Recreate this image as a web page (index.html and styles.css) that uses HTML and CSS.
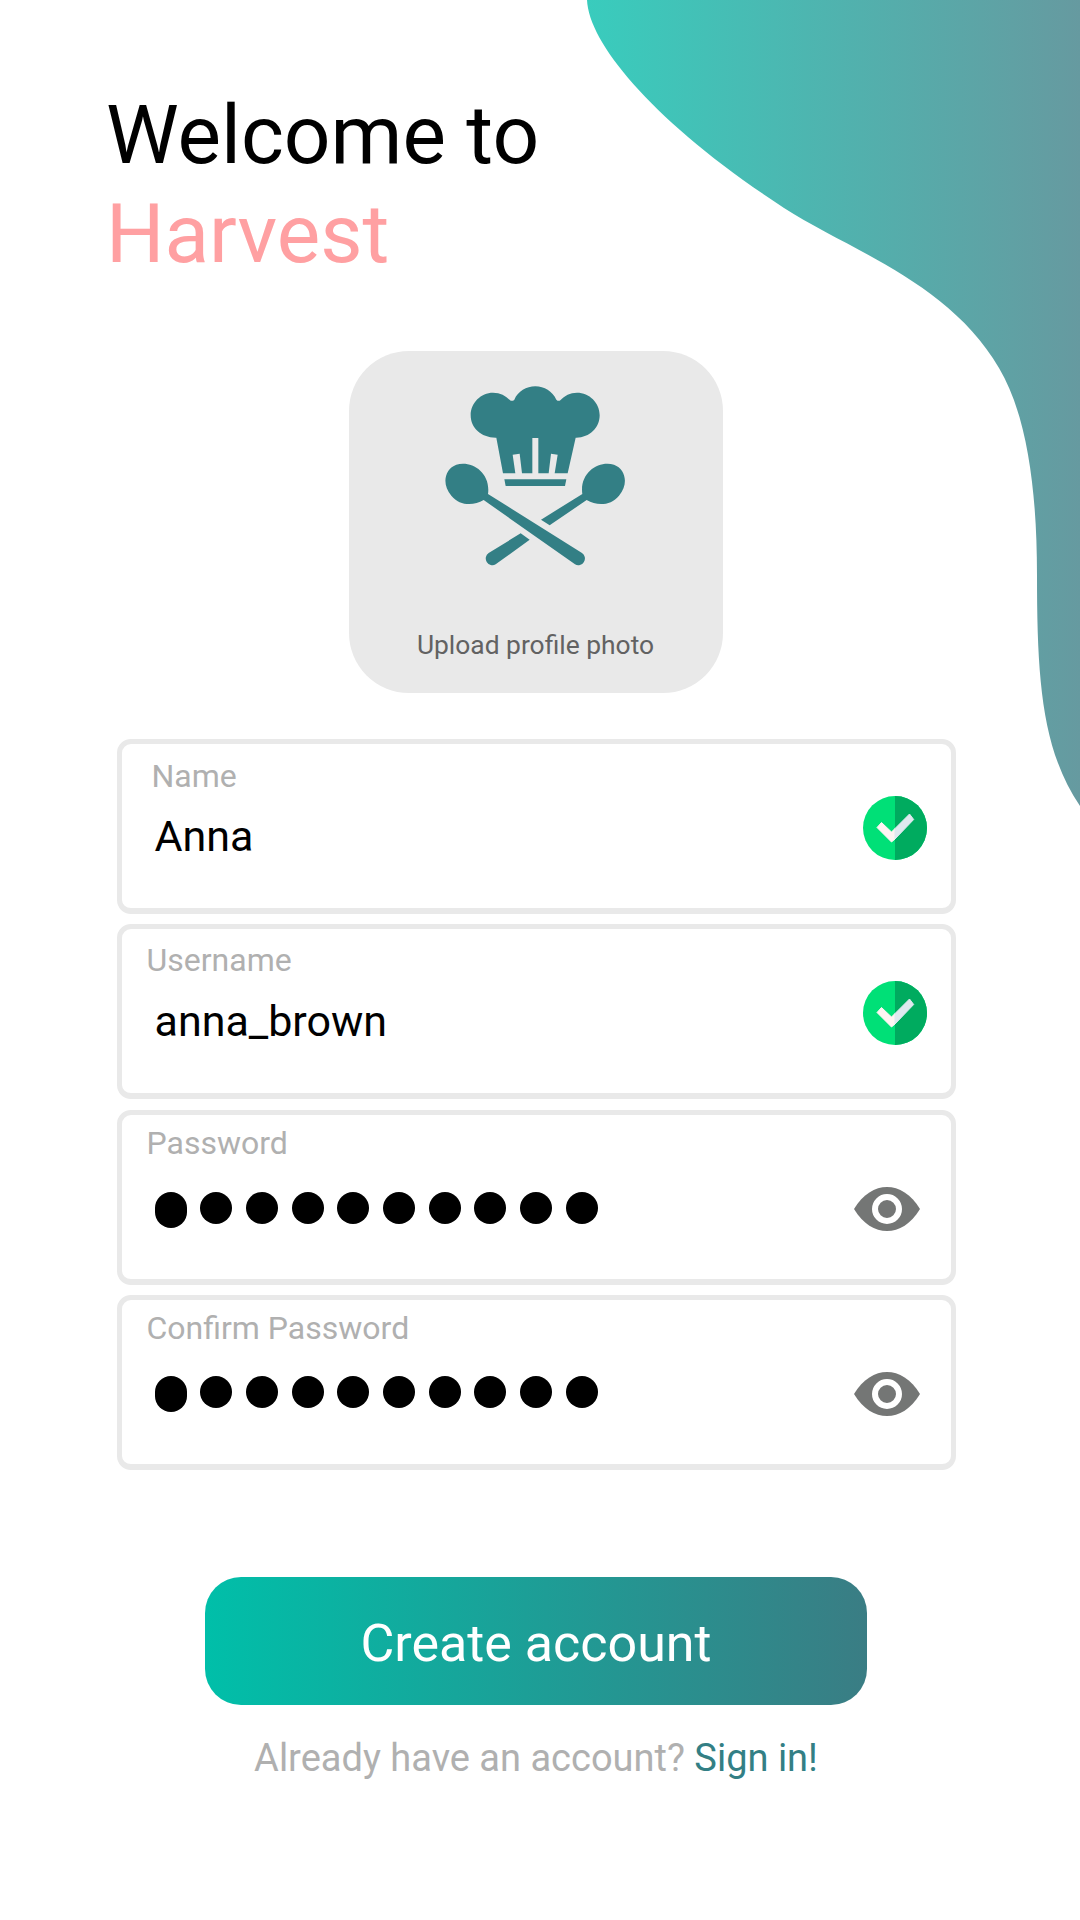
FILE: index.html
```html
<!DOCTYPE html>
<html lang="en">
<head>
<meta charset="utf-8">
<title>Harvest</title>
<link rel="stylesheet" href="styles.css">
</head>
<body>
<main class="page">
  <svg class="blob" viewBox="0 0 493 806" width="493" height="806" aria-hidden="true">
    <defs><linearGradient id="blobFill" x1="0" x2="1" y1="0" y2="0"><stop offset="0" stop-color="#39ccbd"/><stop offset="1" stop-color="#669aa0"/></linearGradient></defs>
    <path fill="url(#blobFill)" d="M0 0 C2 45 70 125 197 208 C262 250 362 282 412 368 C440 415 450 490 450 575 C450 680 455 750 493 806 V0 Z"/>
  </svg>
  <header class="title">
    <div class="title-line">Welcome to</div>
    <div class="title-line title-accent">Harvest</div>
  </header>
  <section class="upload">
    <svg class="chef" viewBox="310 130 555 555" aria-hidden="true">
      <g fill="#337f85">
        <path d="M470 291 C425 292 393 262 393 224 C393 186 424 156 460 156 C482 156 498 165 511 179 Q518 183 524 177 C535 152 560 137 587 137 C614 137 638 152 650 177 Q656 183 662 179 C675 165 691 156 712 156 C749 156 780 186 780 224 C780 262 749 292 708 291 L684 398 H645 L654 342 L634 339 L627 398 H596 V292 H578 V398 H547 L540 339 L519 342 L527 398 H490 Z"/>
        <path d="M494 416 H680 L676 436 H498 Z"/>
        <path d="M445 460 L727 637 A20 20 0 0 1 706 671 L432 478 C400 497 360 495 335 465 C305 430 315 385 350 372 C395 358 454 395 445 460 Z"/>
        <path d="M728 460 L604 537 L630 554 L741 478 C773 497 813 495 838 465 C868 430 858 385 823 372 C778 358 719 395 728 460 Z"/>
        <path d="M543 578 L447 637 A20 20 0 0 0 468 671 L570 597 Z"/>
      </g>
    </svg>
    <span class="upload-text">Upload profile photo</span>
  </section>
  <form class="form">
    <div class="field field-name">
      <div class="field-main">
        <span class="label label-name">Name</span>
        <span class="value">Anna</span>
      </div>
      <svg class="check" viewBox="0 0 64 64" aria-hidden="true">
        <circle cx="32" cy="32" r="32" fill="#00e077"/>
        <path d="M32 0 A32 32 0 0 1 32 64 Z" fill="#00ab5f"/>
        <path d="M18.5 26.5 L14 31.5 L28.5 46 L32 43 V32.5 L28.5 36 Z" fill="#fff5f3" stroke="#fff5f3" stroke-linejoin="round"/>
        <path d="M32 32.5 L46.5 18 L50.7 23.5 L32 43 Z" fill="#dfe9ef" stroke="#dfe9ef" stroke-linejoin="round"/>
      </svg>
    </div>
    <div class="field field-user">
      <div class="field-main">
        <span class="label">Username</span>
        <span class="value">anna_brown</span>
      </div>
      <svg class="check" viewBox="0 0 64 64" aria-hidden="true">
        <circle cx="32" cy="32" r="32" fill="#00e077"/>
        <path d="M32 0 A32 32 0 0 1 32 64 Z" fill="#00ab5f"/>
        <path d="M18.5 26.5 L14 31.5 L28.5 46 L32 43 V32.5 L28.5 36 Z" fill="#fff5f3" stroke="#fff5f3" stroke-linejoin="round"/>
        <path d="M32 32.5 L46.5 18 L50.7 23.5 L32 43 Z" fill="#dfe9ef" stroke="#dfe9ef" stroke-linejoin="round"/>
      </svg>
    </div>
    <div class="field field-pass">
      <div class="field-main">
        <span class="label">Password</span>
        <span class="dots" aria-label="Password hidden"><i class="dot dot-first"></i><i class="dot"></i><i class="dot"></i><i class="dot"></i><i class="dot"></i><i class="dot"></i><i class="dot"></i><i class="dot"></i><i class="dot"></i><i class="dot"></i></span>
      </div>
      <svg class="eye" viewBox="0 0 66 44" aria-hidden="true">
        <path fill="#747675" d="M0 22 C9 7 21 0 33 0 C45 0 57 7 66 22 C57 37 45 44 33 44 C21 44 9 37 0 22 Z"/>
        <circle cx="33" cy="22" r="12" fill="none" stroke="#fff" stroke-width="6"/>
      </svg>
    </div>
    <div class="field field-confirm">
      <div class="field-main">
        <span class="label">Confirm Password</span>
        <span class="dots" aria-label="Password hidden"><i class="dot dot-first"></i><i class="dot"></i><i class="dot"></i><i class="dot"></i><i class="dot"></i><i class="dot"></i><i class="dot"></i><i class="dot"></i><i class="dot"></i><i class="dot"></i></span>
      </div>
      <svg class="eye" viewBox="0 0 66 44" aria-hidden="true">
        <path fill="#747675" d="M0 22 C9 7 21 0 33 0 C45 0 57 7 66 22 C57 37 45 44 33 44 C21 44 9 37 0 22 Z"/>
        <circle cx="33" cy="22" r="12" fill="none" stroke="#fff" stroke-width="6"/>
      </svg>
    </div>
  </form>
  <button class="cta" type="button">Create account</button>
  <p class="signin">Already have an account? <a class="signin-link" href="#">Sign in!</a></p>
</main>
</body>
</html>
```

FILE: styles.css
```css
* { box-sizing: border-box; }
html, body { margin: 0; padding: 0; background: #fff; }
body { font-family: Roboto, "Liberation Sans", sans-serif; }
.page {
  position: relative;
  width: 1080px;
  height: 1920px;
  overflow: hidden;
  display: flex;
  flex-direction: column;
  align-items: center;
  padding: 86px 8px 0 0;
}
.blob { position: absolute; top: 0; left: 587px; }
.title {
  position: relative;
  align-self: flex-start;
  margin-left: 106px;
  font-size: 82px;
  line-height: 99px;
  color: #000;
}
.title-accent { color: #ffa0a2; }
.upload {
  position: relative;
  width: 374px;
  height: 342px;
  margin-top: 67px;
  background: #e9e9e9;
  border-radius: 60px;
  display: flex;
  flex-direction: column;
  align-items: center;
  padding-top: 33px;
}
.chef { width: 185px; height: 185px; margin-left: -1px; }
.upload-text { margin: 60px 1px 0 0; font-size: 26.4px; line-height: 32px; color: #626262; }
.form {
  position: relative;
  display: flex;
  flex-direction: column;
  gap: 10.3px;
  margin-top: 46px;
}
.field {
  width: 839px;
  height: 175px;
  border: 5px solid #e9e9e9;
  border-bottom-width: 6px;
  border-radius: 14px;
  background: #fff;
  display: flex;
  justify-content: space-between;
  align-items: flex-start;
}
.field-main { display: flex; flex-direction: column; padding-left: 25px; }
.label { font-size: 32px; line-height: 36px; color: #b0b0b0; }
.label-name { margin-left: 5px; }
.field-name .field-main { padding-top: 14px; }
.field-user .field-main { padding-top: 13px; }
.field-pass .field-main { padding-top: 10px; }
.field-confirm .field-main { padding-top: 10px; }
.value { margin-left: 8px; font-size: 43px; line-height: 52px; color: #000; }
.field-name .value { margin-top: 16px; }
.field-user .value { margin-top: 17px; }
.check { width: 64px; height: 64px; margin: 52px 24px 0 0; }
.eye { width: 66px; height: 44px; margin: 72px 31px 0 0; }
.dots { display: flex; align-items: flex-start; gap: 13.7px; margin-left: 8px; }
.field-pass .dots { margin-top: 31px; }
.field-confirm .dots { margin-top: 30px; }
.dot { display: block; width: 32px; height: 32px; border-radius: 50%; background: #000; }
.dot-first { height: 36px; border-radius: 16px; }
.cta {
  width: 662px;
  height: 128px;
  margin-top: 107px;
  border: 0;
  border-radius: 36px;
  background: linear-gradient(90deg, #00bfa9, #3a7d84);
  color: #fff;
  font-family: inherit;
  font-size: 52px;
  padding: 6px 0 0;
}
.signin { margin: 31px 0 0; font-size: 38px; line-height: 44px; color: #b0b0b0; }
.signin-link { color: #337f85; text-decoration: none; }
```
